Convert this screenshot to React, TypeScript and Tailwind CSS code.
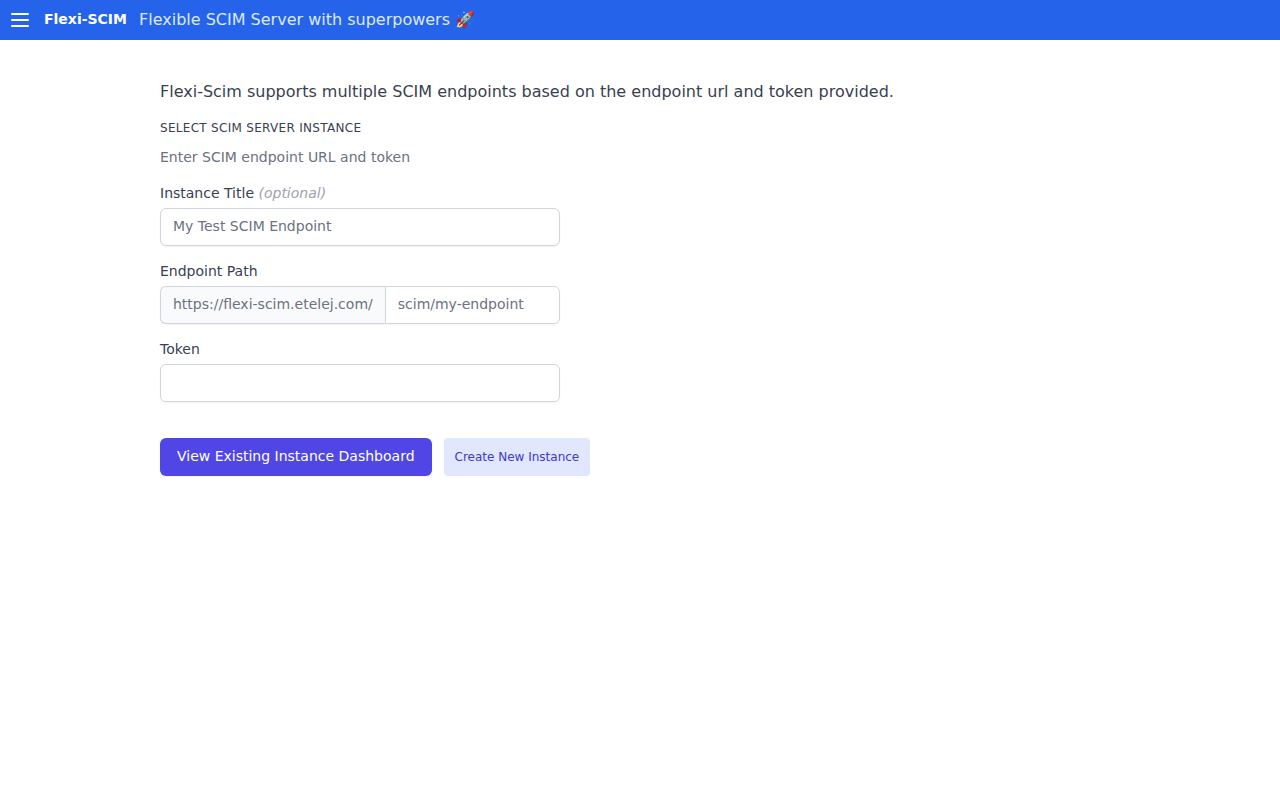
import { useState } from "react";

type FieldProps = {
  id: string;
  label: string;
  hint?: string;
  children: React.ReactNode;
};

function Field({ id, label, hint, children }: FieldProps) {
  return (
    <div>
      <label
        htmlFor={id}
        className="block text-sm/[18px] font-medium text-[#374151]"
      >
        {label} {hint && <i className="font-light text-[#9ca3af]">{hint}</i>}
      </label>
      <div className="mt-1.5 flex rounded-md shadow-xs">{children}</div>
    </div>
  );
}

const inputClass =
  "min-w-0 flex-1 border border-[#d1d5db] px-3 pt-2 pb-2.5 text-sm/[18px] text-[#111827] placeholder:text-[#6b7280]";

export default function App() {
  const [title, setTitle] = useState("");
  const [path, setPath] = useState("");
  const [token, setToken] = useState("");

  return (
    <div className="min-h-screen bg-white font-['DejaVu_Sans',sans-serif]">
      <header className="flex h-10 items-center bg-[#2563eb] px-2 text-white">
        <button type="button" aria-label="Open menu">
          <svg
            className="size-6"
            fill="none"
            viewBox="0 0 24 24"
            stroke="currentColor"
            strokeWidth={2}
            strokeLinecap="round"
            strokeLinejoin="round"
          >
            <path d="M4 6h16M4 12h16M4 18h16" />
          </svg>
        </button>
        <a href="#" className="ml-3 pb-0.5 text-sm/[18px] font-bold">
          Flexi-SCIM
        </a>
        <span className="ml-3 text-base text-[#dbeafe]">
          Flexible SCIM Server with superpowers 🚀
        </span>
      </header>

      <main className="mx-auto max-w-5xl px-8 pt-10">
        <p className="text-base text-[#374151]">
          Flexi-Scim supports multiple SCIM endpoints based on the endpoint url
          and token provided.
        </p>
        <h2 className="mt-4 text-xs tracking-wide text-[#374151] uppercase">
          Select SCIM Server Instance
        </h2>
        <p className="mt-3 pb-0.5 text-sm/[18px] text-[#6b7280]">
          Enter SCIM endpoint URL and token
        </p>

        <form onSubmit={(e) => e.preventDefault()}>
          <div className="mt-4 max-w-[400px] space-y-4">
            <Field id="title" label="Instance Title" hint="(optional)">
              <input
                id="title"
                type="text"
                value={title}
                onChange={(e) => setTitle(e.target.value)}
                placeholder="My Test SCIM Endpoint"
                className={`${inputClass} rounded-md`}
              />
            </Field>
            <Field id="path" label="Endpoint Path">
              <span className="rounded-l-md border border-r-0 border-[#d1d5db] bg-[#f9fafb] px-3 pt-2 pb-2.5 text-sm/[18px] text-[#6b7280]">
                https://flexi-scim.etelej.com/
              </span>
              <input
                id="path"
                type="text"
                value={path}
                onChange={(e) => setPath(e.target.value)}
                placeholder="scim/my-endpoint"
                className={`${inputClass} rounded-r-md`}
              />
            </Field>
            <Field id="token" label="Token">
              <input
                id="token"
                type="text"
                value={token}
                onChange={(e) => setToken(e.target.value)}
                className={`${inputClass} rounded-md`}
              />
            </Field>
          </div>

          <div className="mt-9 flex gap-3">
            <button
              type="submit"
              className="rounded-md border border-transparent bg-[#4f46e5] px-4 pt-2 pb-2.5 text-sm/[18px] font-medium text-white shadow-xs"
            >
              View Existing Instance Dashboard
            </button>
            <button
              type="button"
              className="rounded-sm border border-transparent bg-[#e0e7ff] px-2.5 py-1.5 text-xs font-medium text-[#4338ca]"
            >
              Create New Instance
            </button>
          </div>
        </form>
      </main>
    </div>
  );
}
